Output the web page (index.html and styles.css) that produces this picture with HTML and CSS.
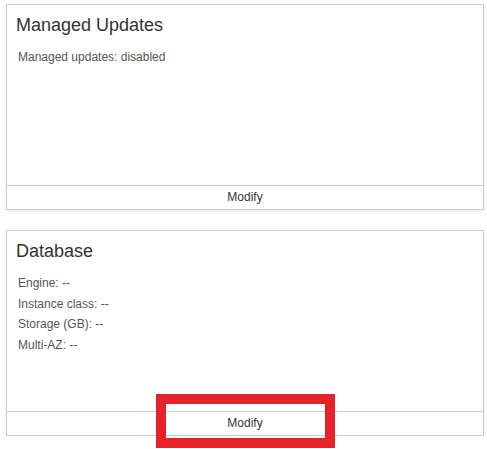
FILE: index.html
```html
<!DOCTYPE html>
<html>
<head>
<meta charset="utf-8">
<link rel="stylesheet" href="styles.css">
</head>
<body>
<div class="page">
  <div class="card">
    <div class="card-body">
      <h2 class="title">Managed Updates</h2>
      <div class="line">Managed updates: disabled</div>
    </div>
    <div class="card-footer">Modify</div>
  </div>
  <div class="card">
    <div class="card-body">
      <h2 class="title">Database</h2>
      <div class="line">Engine: --</div>
      <div class="line">Instance class: --</div>
      <div class="line">Storage (GB): --</div>
      <div class="line">Multi-AZ: --</div>
    </div>
    <div class="card-footer">Modify</div>
  </div>
</div>
<div class="highlight"></div>
</body>
</html>
```
FILE: styles.css
```css
html, body {
  margin: 0;
  padding: 0;
  background: #ffffff;
  font-family: "Liberation Sans", Arial, sans-serif;
}
.page {
  padding: 4px 3px 0 6px;
  display: flex;
  flex-direction: column;
  gap: 20px;
}
.card {
  border: 1px solid #cccccc;
  background: #fff;
  box-shadow: 0 2px 4px rgba(0,0,0,0.08);
}
.card-body {
  height: 180px;
  padding: 8px 10px 0 9px;
  box-sizing: border-box;
}
.title {
  margin: 0 0 10px 0;
  font-size: 18px;
  font-weight: normal;
  color: #333333;
  line-height: 24px;
}
.line {
  font-size: 12px;
  color: #555555;
  line-height: 20.5px;
  padding-left: 2px;
}
.card-footer {
  border-top: 1px solid #cccccc;
  height: 23px;
  line-height: 23px;
  text-align: center;
  font-size: 12px;
  color: #333333;
}
.highlight {
  position: absolute;
  left: 156px;
  top: 394px;
  width: 159px;
  height: 34px;
  border: 10px solid #e8202a;
}
```
